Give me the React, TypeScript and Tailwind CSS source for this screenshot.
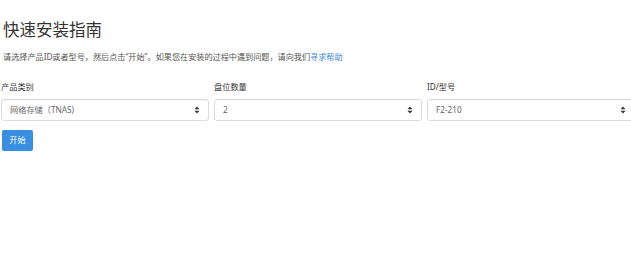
import React from "react";

const Arrows = () => (
  <svg width="6" height="8" viewBox="0 0 6 8" className="shrink-0">
    <path d="M3 0.5 L5.5 3.2 H0.5 Z" fill="#333" />
    <path d="M3 7.5 L5.5 4.8 H0.5 Z" fill="#333" />
  </svg>
);

const Field = ({ label, value }: { label: string; value: string }) => (
  <div className="flex flex-col w-[208px] shrink-0">
    <div className="text-[8.2px] leading-[12px] text-[#333] h-[12px] mb-[6px]">{label}</div>
    <div className="h-[22px] border border-[#dcdcdc] rounded-[3px] bg-white flex items-center justify-between pl-[8px] pr-[8px] shadow-[inset_0_1px_1px_rgba(0,0,0,0.04)]">
      <span className="text-[8.2px] text-[#666]">{value}</span>
      <Arrows />
    </div>
  </div>
);

export default function App() {
  return (
    <div
      className="w-[631px] h-[266px] overflow-hidden bg-white"
      style={{ fontFamily: '"Noto Sans", "Noto Sans CJK SC", sans-serif' }}
    >
      <div className="pl-[1px] pt-[18px]">
        <h1 className="pl-[2px] text-[16.5px] leading-[24px] text-[#333] font-normal">快速安装指南</h1>
        <p className="pl-[2px] mt-[9px] text-[8.15px] leading-[12px] text-[#555]">
          请选择产品ID或者型号，然后点击“开始”。如果您在安装的过程中遇到问题，请向我们<span className="text-[#3a87d6]">寻求帮助</span>
        </p>
        <div className="flex gap-[5px] mt-[18px]">
          <Field label="产品类别" value="网络存储（TNAS)" />
          <Field label="盘位数量" value="2" />
          <Field label="ID/型号" value="F2-210" />
        </div>
        <button className="mt-[9px] ml-[1px] w-[31px] h-[21px] rounded-[2px] bg-[#3a8ee0] text-white text-[8.2px] flex items-center justify-center">
          开始
        </button>
      </div>
    </div>
  );
}
